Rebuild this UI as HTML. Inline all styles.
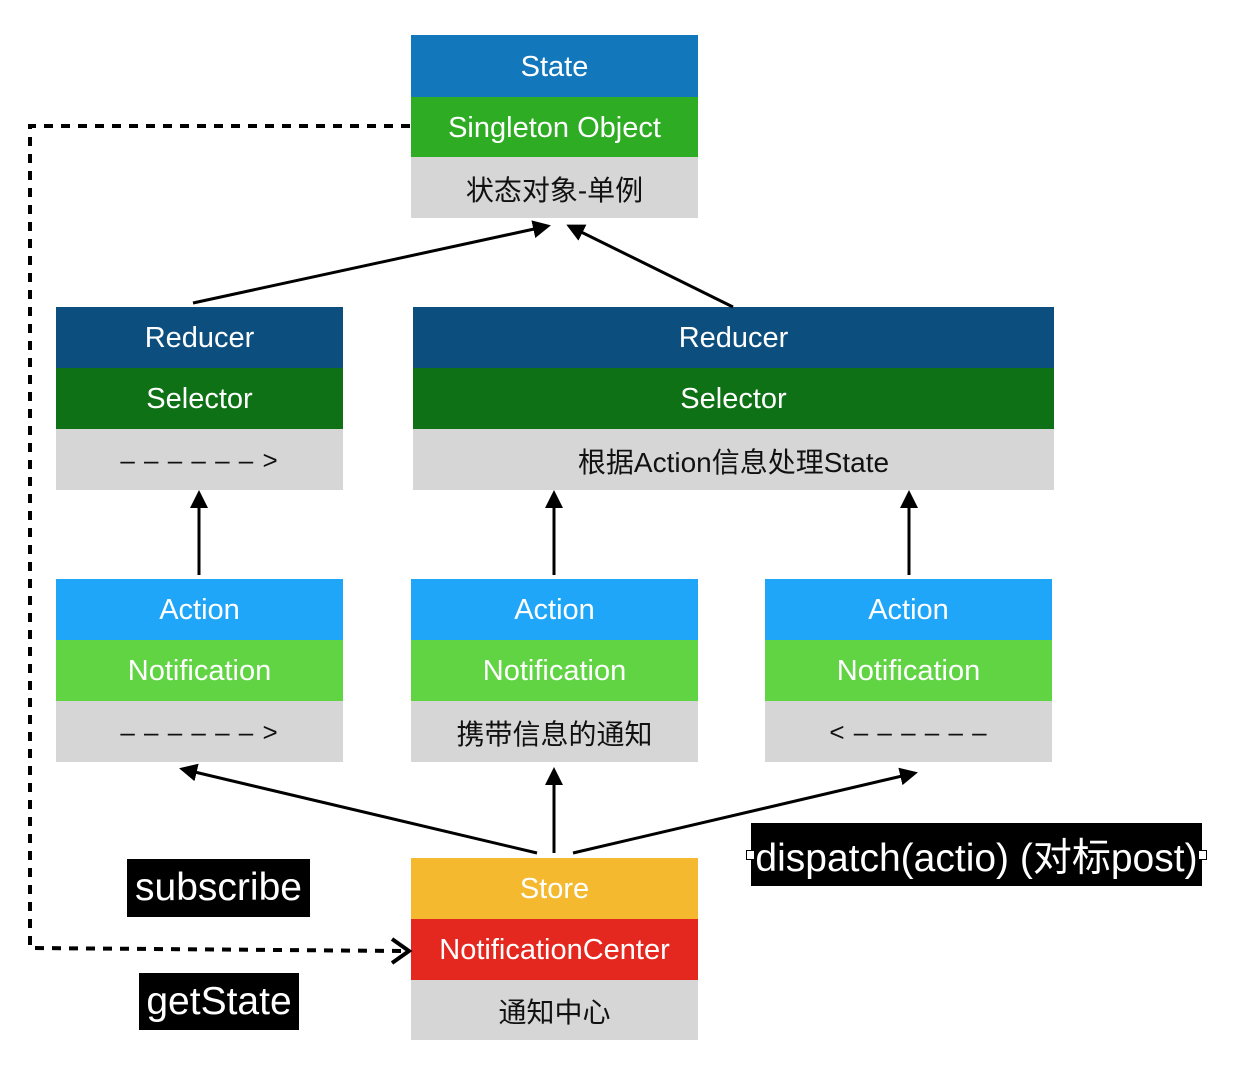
<!DOCTYPE html>
<html><head><meta charset="utf-8"><style>
body{margin:0;width:1234px;height:1068px;background:#fff;position:relative;overflow:hidden;font-family:"Liberation Sans","Noto Sans CJK SC",sans-serif}
.r{position:absolute;display:flex;align-items:center;justify-content:center;font-size:29px;color:#fff;padding-top:2px;box-sizing:border-box}
.g{background:#d6d6d6;color:#111;font-size:28px}
.d{font-size:26px;letter-spacing:1px}
.lab{position:absolute;background:#000;color:#fff;display:flex;align-items:center;justify-content:center;font-size:39px}
svg{position:absolute;left:0;top:0}
</style></head><body>
<div class="r" style="left:411px;top:35px;width:287px;height:62px;background:#1277bb">State</div>
<div class="r" style="left:411px;top:97px;width:287px;height:60px;background:#2ead24">Singleton Object</div>
<div class="r g" style="left:411px;top:157px;width:287px;height:61px">状态对象-单例</div>
<div class="r" style="left:56px;top:307px;width:287px;height:61px;background:#0c4f7f">Reducer</div>
<div class="r" style="left:56px;top:368px;width:287px;height:61px;background:#0f7115">Selector</div>
<div class="r g d" style="left:56px;top:429px;width:287px;height:61px">– – – – – – &gt;</div>
<div class="r" style="left:413px;top:307px;width:641px;height:61px;background:#0c4f7f">Reducer</div>
<div class="r" style="left:413px;top:368px;width:641px;height:61px;background:#0f7115">Selector</div>
<div class="r g" style="left:413px;top:429px;width:641px;height:61px">根据Action信息处理State</div>
<div class="r" style="left:56px;top:579px;width:287px;height:61px;background:#1fa6f9">Action</div>
<div class="r" style="left:56px;top:640px;width:287px;height:61px;background:#61d444">Notification</div>
<div class="r g d" style="left:56px;top:701px;width:287px;height:61px">– – – – – – &gt;</div>
<div class="r" style="left:411px;top:579px;width:287px;height:61px;background:#1fa6f9">Action</div>
<div class="r" style="left:411px;top:640px;width:287px;height:61px;background:#61d444">Notification</div>
<div class="r g" style="left:411px;top:701px;width:287px;height:61px">携带信息的通知</div>
<div class="r" style="left:765px;top:579px;width:287px;height:61px;background:#1fa6f9">Action</div>
<div class="r" style="left:765px;top:640px;width:287px;height:61px;background:#61d444">Notification</div>
<div class="r g d" style="left:765px;top:701px;width:287px;height:61px">&lt; – – – – – –</div>
<div class="r" style="left:411px;top:858px;width:287px;height:61px;background:#f4b92e">Store</div>
<div class="r" style="left:411px;top:919px;width:287px;height:61px;background:#e5281f">NotificationCenter</div>
<div class="r g" style="left:411px;top:980px;width:287px;height:60px">通知中心</div>
<div class="lab" style="left:127px;top:859px;width:183px;height:58px">subscribe</div>
<div class="lab" style="left:139px;top:973px;width:160px;height:57px">getState</div>
<div class="lab" style="left:751px;top:823px;width:451px;height:63px">dispatch(actio) (对标post)</div>
<div style="position:absolute;left:746px;top:850px;width:7px;height:8px;background:#fff;border:1px solid #000"></div>
<div style="position:absolute;left:1198px;top:850px;width:7px;height:8px;background:#fff;border:1px solid #000"></div>
<svg width="1234" height="1068">
<defs><marker id="a" markerWidth="6" markerHeight="6" refX="5" refY="3" orient="auto" markerUnits="strokeWidth"><path d="M0,0 L6,3 L0,6 z" fill="#000"/></marker></defs>
<g stroke="#000" stroke-width="3" fill="none" marker-end="url(#a)">
<line x1="193" y1="303" x2="548" y2="226"/>
<line x1="733" y1="307" x2="569" y2="226"/>
<line x1="199" y1="575" x2="199" y2="493"/>
<line x1="554" y1="575" x2="554" y2="493"/>
<line x1="909" y1="575" x2="909" y2="493"/>
<line x1="537" y1="853" x2="182" y2="769"/>
<line x1="554" y1="853" x2="554" y2="770"/>
<line x1="573" y1="853" x2="915" y2="773"/>
</g>
<path d="M410,126 H30 V948 L402,951" stroke="#000" stroke-width="4" fill="none" stroke-dasharray="9,8"/>
<path d="M392,939 L409,951 L392,963" stroke="#000" stroke-width="4" fill="none"/>
</svg>
</body></html>
